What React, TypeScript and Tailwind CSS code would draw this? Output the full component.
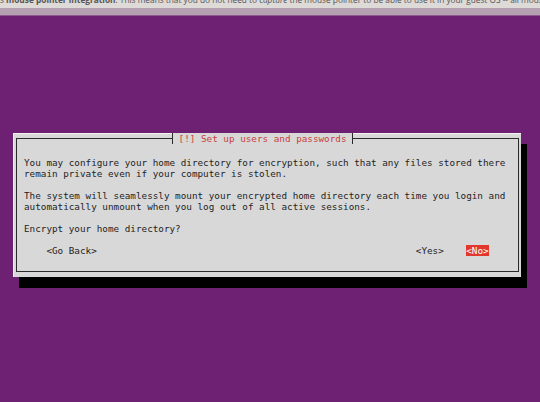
import React from "react";

const mono = { fontFamily: '"DejaVu Sans Mono", "Liberation Mono", monospace' };

export default function App() {
  const lines = [
    "You may configure your home directory for encryption, such that any files stored there",
    "remain private even if your computer is stolen.",
    "",
    "The system will seamlessly mount your encrypted home directory each time you login and",
    "automatically unmount when you log out of all active sessions.",
    "",
    "Encrypt your home directory?",
    "",
  ];
  return (
    <div className="w-[540px] h-[402px] bg-[#6e2172] flex flex-col overflow-hidden">
      <div className="h-[8px] bg-[#dddad7] overflow-hidden">
        <div
          className="whitespace-nowrap text-[8.3px] leading-[8px] text-[#555] mt-[-4px] ml-[-3px]"
          style={{ fontFamily: '"Open Sans", "Liberation Sans", sans-serif' }}
        >
          ts <b>mouse pointer integration</b>. This means that you do not need to <i>capture</i> the mouse pointer to be able to use it in your guest OS -- all mouse
        </div>
      </div>
      <div className="h-[7px] bg-[#b4a0b1]" />
      <div className="h-px bg-[#8c5a8c]" />
      <div className="ml-[13px] mt-[117px] w-[508px] h-[144px] bg-[#d8d8d8] border-l border-t border-[#f2f2f2] pl-[2px] pt-[4px] pr-[2px] pb-[5px] shadow-[6px_11px_0_0_#000]">
        <div className="relative h-full border border-[#2a2a2a]">
          <div className="absolute left-[155px] top-[-6px] flex items-center bg-[#d8d8d8]">
            <div className="w-px h-[11px] bg-[#2a2a2a]" />
            <div className="text-[9.3px] leading-[11px] text-[#c8403e] whitespace-pre" style={mono}>
              {" [!] Set up users and passwords "}
            </div>
            <div className="w-px h-[11px] bg-[#2a2a2a]" />
          </div>
          <div className="pl-[7px] pt-[18px] text-[9.3px] leading-[11px] text-[#1e1e1e] whitespace-pre" style={mono}>
            {lines.map((l, i) => (
              <div key={i} className="h-[11px]">{l}</div>
            ))}
            <div className="h-[11px]">
              {"    <Go Back>" + " ".repeat(57) + "<Yes>" + "    "}
              <span className="bg-[#e0382c] text-white">{"<No>"}</span>
            </div>
          </div>
        </div>
      </div>
    </div>
  );
}
